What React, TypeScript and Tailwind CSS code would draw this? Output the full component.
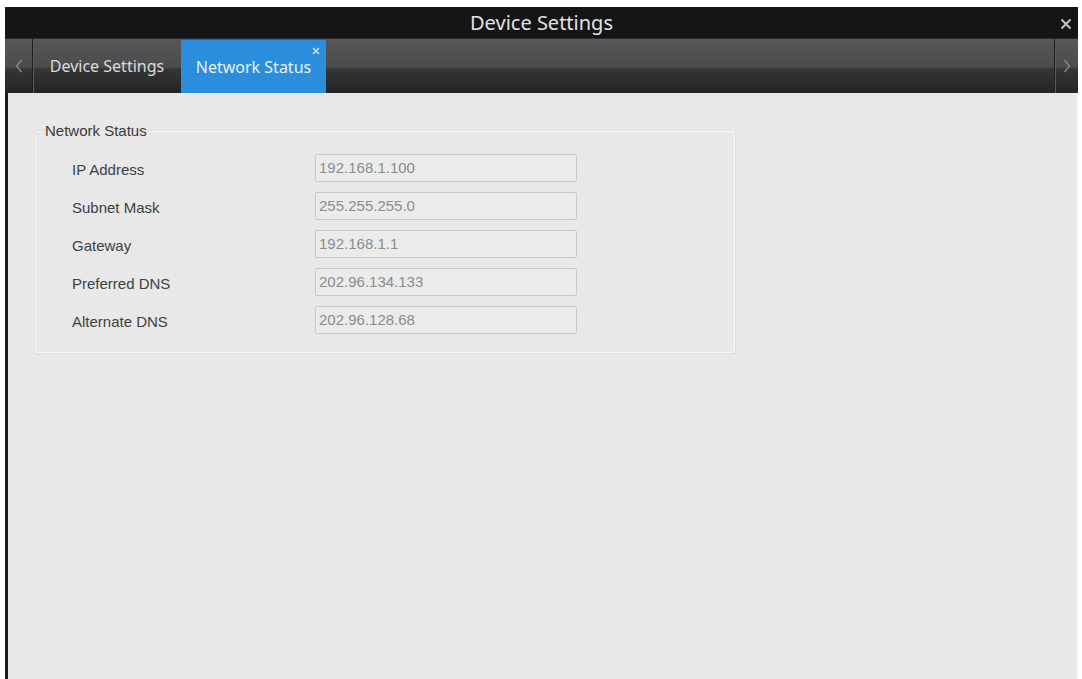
const rows = [
  { label: "IP Address", value: "192.168.1.100" },
  { label: "Subnet Mask", value: "255.255.255.0" },
  { label: "Gateway", value: "192.168.1.1" },
  { label: "Preferred DNS", value: "202.96.134.133" },
  { label: "Alternate DNS", value: "202.96.128.68" },
];

function Chevron({ dir }: { dir: "left" | "right" }) {
  return (
    <svg width="8" height="14" viewBox="0 0 8 14" fill="none">
      <path
        d={dir === "left" ? "M6.5 1 L1.5 7 L6.5 13" : "M1.5 1 L6.5 7 L1.5 13"}
        stroke="#8a8a8a"
        strokeWidth="1.3"
      />
    </svg>
  );
}

export default function App() {
  return (
    <div className="w-[1082px] h-[679px] bg-white pt-[7px] pl-[5px] pr-[4px] overflow-hidden">
      <div className="flex flex-col h-full">
        {/* title bar */}
        <div className="relative h-[31px] bg-[#151518] flex items-center justify-center font-['Noto_Sans',sans-serif]">
          <span className="text-[20px] text-[#e2e2e2]">Device Settings</span>
          <svg className="absolute right-[6px] top-[11px]" width="12" height="12" viewBox="0 0 12 12">
            <path d="M1.5 1.5 L10.5 10.5 M10.5 1.5 L1.5 10.5" stroke="#c4c4c4" strokeWidth="2" />
          </svg>
        </div>

        {/* tab bar */}
        <div className="h-[55px] flex bg-[linear-gradient(#58585b_0%,#4b4b4e_52%,#353537_56%,#242424_100%)] border-t border-[#2a2a2c] font-['Noto_Sans',sans-serif]">
          <div className="w-[28px] flex items-center justify-center border-r border-[#1e1e1e] shadow-[1px_0_0_#5c5c5c]">
            <Chevron dir="left" />
          </div>
          <div className="w-[148px] flex items-center justify-center text-[16px] text-[#dcdcdc]">
            Device Settings
          </div>
          <div className="relative w-[145px] mt-[1px] bg-[#2b8edc] flex items-center justify-center text-[16px] text-[#e6f1fb]">
            Network Status
            <svg className="absolute right-[6px] top-[7px]" width="8" height="8" viewBox="0 0 8 8">
              <path d="M1 1 L7 7 M7 1 L1 7" stroke="#d8ecfb" strokeWidth="1.3" />
            </svg>
          </div>
          <div className="flex-1" />
          <div className="w-[24px] flex items-center justify-center border-l border-[#1e1e1e] shadow-[inset_1px_0_0_#5c5c5c]">
            <Chevron dir="right" />
          </div>
        </div>

        {/* content */}
        <div className="flex-1 bg-[#e8e8e8] border-l-[3px] border-l-[#1a1a1a] border-r border-r-[#f4f4f4] pl-[27px] pt-[29px] font-['Liberation_Sans',Arial,sans-serif]">
          <fieldset className="w-[700px] border border-[#f7f7f7] shadow-[0_0_0_1px_#dedede] rounded-[2px] pl-[36px] pt-[14px] pb-[18px]">
            <legend className="ml-[-30px] px-[3px] text-[15px] leading-[18px] text-[#3a3a3a]">Network Status</legend>
            <div className="flex flex-col gap-[10px]">
              {rows.map((r) => (
                <div key={r.label} className="flex items-center h-[28px]">
                  <div className="w-[243px] mt-[5px] text-[15px] text-[#404040]">{r.label}</div>
                  <div className="w-[262px] h-[28px] border border-[#c9c9c9] rounded-[2px] bg-[#ebebeb] flex items-center px-[3px] text-[15px] text-[#8c8c8c]">
                    {r.value}
                  </div>
                </div>
              ))}
            </div>
          </fieldset>
        </div>
      </div>
    </div>
  );
}
